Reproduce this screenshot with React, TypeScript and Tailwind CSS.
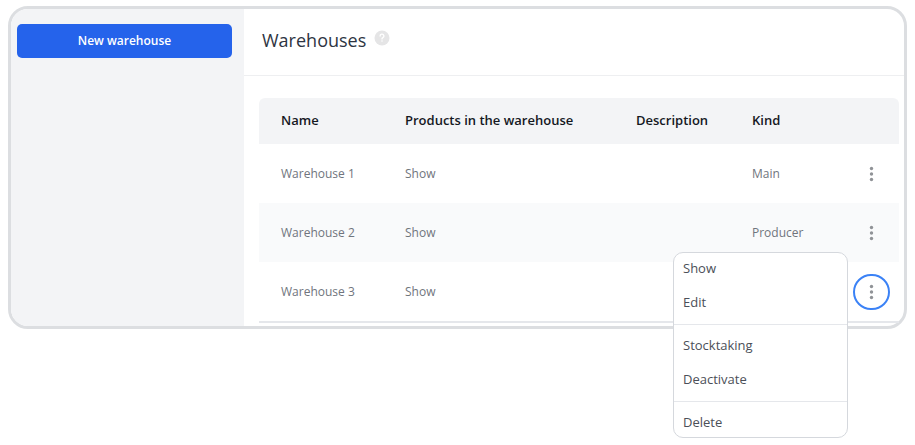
import React from 'react';

type Warehouse = {
  name: string;
  description: string;
  kind: string;
};

const warehouses: Warehouse[] = [
  { name: 'Warehouse 1', description: '', kind: 'Main' },
  { name: 'Warehouse 2', description: '', kind: 'Producer' },
  { name: 'Warehouse 3', description: '', kind: '' },
];

const menuGroups = [['Show', 'Edit'], ['Stocktaking', 'Deactivate'], ['Delete']];

const DotsIcon: React.FC = () => (
  <svg width="7" height="16" viewBox="0 0 7 16" fill="currentColor" aria-hidden="true">
    <circle cx="3.5" cy="2.5" r="1.7" />
    <circle cx="3.5" cy="8" r="1.7" />
    <circle cx="3.5" cy="13.5" r="1.7" />
  </svg>
);

const HelpIcon: React.FC = () => (
  <svg width="16" height="16" viewBox="0 0 16 16" fill="none" aria-hidden="true">
    <circle cx="8" cy="8" r="7.5" fill="#e5e5e6" />
    <path d="M6.1 6a1.9 1.9 0 1 1 2.8 1.7c-.6.3-.9.6-.9 1.2" stroke="#fff" strokeWidth="1.4" strokeLinecap="round" />
    <circle cx="8" cy="11" r="0.8" fill="#fff" />
  </svg>
);

const RowMenu: React.FC = () => (
  <div
    role="menu"
    className="absolute right-full -top-[22px] mr-[5px] w-[175px] rounded-[10px] border border-[#d5d8dd] bg-white divide-y divide-gray-200"
  >
    {menuGroups.map((group) => (
      <div key={group[0]} className="flex flex-col gap-[10px] py-[9px] first:pt-1 last:pb-0.5">
        {group.map((item) => (
          <button key={item} type="button" role="menuitem" className="h-6 px-[9px] text-left text-[13px] text-[#4b4f58]">
            {item}
          </button>
        ))}
      </div>
    ))}
  </div>
);

const App: React.FC = () => {
  const openRow = 2;

  return (
    <div className="min-h-screen bg-white px-2 pt-1.5 font-['Open_Sans','Noto_Sans',sans-serif]">
      <div className="flex rounded-[20px] border-[3px] border-[#dcdee1] bg-white">
        <aside className="w-[233px] shrink-0 rounded-l-[17px] bg-gray-100 pl-1.5 pr-3 pt-[15px]">
          <button type="button" className="h-[34px] w-full rounded-[5px] bg-[#2563eb] text-[12px] font-semibold text-white">
            New warehouse
          </button>
        </aside>

        <main className="min-w-0 flex-1">
          <header className="flex h-[67px] items-start gap-2 border-b border-[#eeeff1] pl-[18px] pt-[17px]">
            <h1 className="text-[18px] leading-7 font-medium text-[#2d3442]">Warehouses</h1>
            <button type="button" aria-label="Help" className="mt-1">
              <HelpIcon />
            </button>
          </header>

          <div className="pb-[3px] pl-[15px] pr-[5px] pt-[22px]">
            <div className="border-b-2 border-gray-200">
              <table className="w-full table-fixed text-left text-[12px]">
                <thead>
                  <tr className="h-[46px] text-[13px] text-[#15181f]">
                    <th className="w-[124px] rounded-tl-md bg-gray-100 pl-[22px] font-semibold">Name</th>
                    <th className="bg-gray-100 pl-[22px] font-semibold">Products in the warehouse</th>
                    <th className="w-[116px] bg-gray-100 pl-[22px] font-semibold">Description</th>
                    <th className="w-[114px] bg-gray-100 pl-[22px] font-semibold">Kind</th>
                    <th className="w-[55px] rounded-tr-md bg-gray-100" aria-label="Actions"></th>
                  </tr>
                </thead>
                <tbody>
                  {warehouses.map((warehouse, index) => (
                    <tr key={warehouse.name} className="h-[59px] text-[#70757d] even:bg-gray-50">
                      <td className="pl-[22px]">{warehouse.name}</td>
                      <td className="pl-[22px]">
                        <a href="#products">Show</a>
                      </td>
                      <td className="pl-[22px]">{warehouse.description}</td>
                      <td className="pl-[22px]">{warehouse.kind}</td>
                      <td>
                        <div className="relative mx-auto h-9 w-[37px]">
                          <button
                            type="button"
                            aria-label={`Actions for ${warehouse.name}`}
                            aria-haspopup="menu"
                            aria-expanded={index === openRow}
                            className="flex h-9 w-[37px] items-center justify-center rounded-full border-2 border-transparent text-[#909397] aria-expanded:border-[#3b82f6]"
                          >
                            <DotsIcon />
                          </button>
                          {index === openRow && <RowMenu />}
                        </div>
                      </td>
                    </tr>
                  ))}
                </tbody>
              </table>
            </div>
          </div>
        </main>
      </div>
    </div>
  );
};

export default App;
